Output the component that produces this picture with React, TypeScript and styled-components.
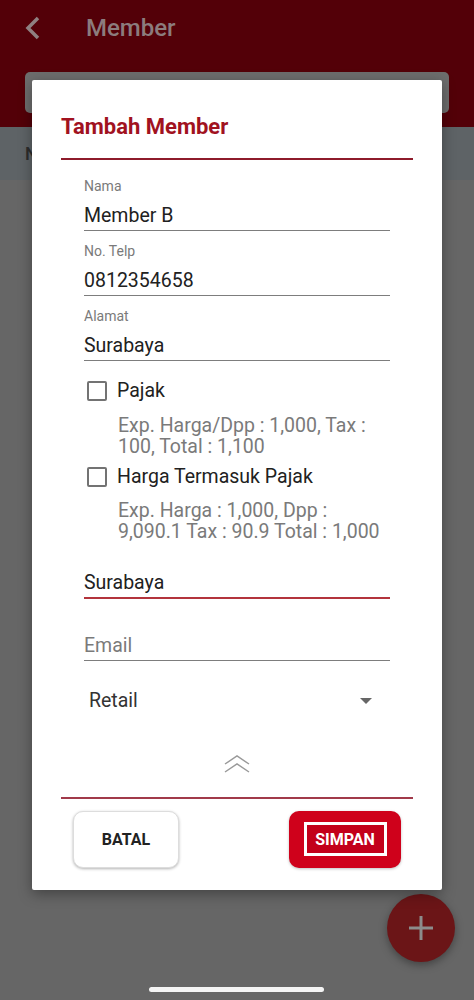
import React from 'react';
import styled, { createGlobalStyle } from 'styled-components';

const GlobalStyle = createGlobalStyle`
    html, body {
        margin: 0;
        padding: 0;
        background: #666666;
    }
    * {
        box-sizing: border-box;
    }
`;

const Screen = styled.div`
    position: relative;
    width: 474px;
    height: 1000px;
    overflow: hidden;
    background: #666666;
    font-family: Roboto, "Liberation Sans", sans-serif;
`;

// dimmed page behind the dialog
const AppBar = styled.header`
    height: 127px;
    background: #530008;
    display: flex;
    flex-direction: column;
`;

const TopRow = styled.div`
    height: 56px;
    display: flex;
    align-items: center;
    padding-left: 25px;
    gap: 45px;
`;

const PageTitle = styled.h1`
    margin: 0;
    font-size: 24px;
    line-height: 56px;
    font-weight: 500;
    color: #8c7c7d;
`;

const SearchBar = styled.div`
    margin: 16px 25px 0;
    height: 41px;
    border-radius: 5px;
    background: #6d6d6d;
`;

const ColumnHeader = styled.div`
    height: 53px;
    background: #5e6366;
    display: flex;
    align-items: center;
    padding-left: 25px;
    font-size: 18px;
    font-weight: 500;
    color: #2c2c2c;
`;

const Fab = styled.div`
    position: absolute;
    right: 19px;
    top: 894px;
    width: 68px;
    height: 68px;
    border-radius: 50%;
    background: #6b1517;
    box-shadow: 0 3px 8px rgba(0, 0, 0, 0.35);
    display: flex;
    align-items: center;
    justify-content: center;
`;

const HomeBar = styled.div`
    position: absolute;
    left: 149px;
    bottom: 8px;
    width: 175px;
    height: 5px;
    border-radius: 3px;
    background: #f4f4f4;
`;

// dialog
const Dialog = styled.div`
    position: absolute;
    top: 80px;
    left: 32px;
    width: 410px;
    height: 810px;
    background: #ffffff;
    border-radius: 2px;
    box-shadow: 0 4px 14px rgba(0, 0, 0, 0.35);
    padding: 34px 29px 21px;
    display: flex;
    flex-direction: column;
`;

const DialogTitle = styled.h2`
    margin: 0;
    font-size: 22px;
    line-height: 26px;
    font-weight: 700;
    color: #a1121f;
`;

const Divider = styled.div<{ $top: number; $color: string }>`
    margin-top: ${p => p.$top}px;
    height: 1.5px;
    background: ${p => p.$color};
`;

const Form = styled.div`
    padding: 0 23px;
    display: flex;
    flex-direction: column;
`;

const Field = styled.div<{ $top: number }>`
    margin-top: ${p => p.$top}px;
    display: flex;
    flex-direction: column;
`;

const Label = styled.span`
    font-size: 14px;
    line-height: 16px;
    color: #7a7a7a;
    margin-bottom: 11px;
`;

const Value = styled.div<{ $active?: boolean; $placeholder?: boolean }>`
    font-size: 19.5px;
    line-height: 22px;
    color: ${p => (p.$placeholder ? '#7a7a7a' : '#212121')};
    padding-bottom: ${p => (p.$active ? '3.5px' : '3px')};
    border-bottom: ${p => (p.$active ? '2px solid #b3343c' : '1px solid #7d7d7d')};
`;

const CheckRow = styled.label<{ $top: number }>`
    margin-top: ${p => p.$top}px;
    display: flex;
    align-items: center;
    gap: 10px;
    padding-left: 3px;
    font-size: 19.5px;
    line-height: 22px;
    color: #212121;
`;

const Box = styled.span`
    width: 20px;
    height: 20px;
    border: 2px solid #737373;
    border-radius: 2px;
`;

const Hint = styled.p<{ $top: number }>`
    margin: ${p => p.$top}px 0 0;
    padding-left: 34px;
    font-size: 19.5px;
    line-height: 21px;
    color: #7a7a7a;
`;

const Select = styled.div`
    margin-top: 29.5px;
    display: flex;
    align-items: center;
    justify-content: space-between;
    padding: 0 18px 0 5px;
    font-size: 19.5px;
    line-height: 22px;
    color: #333333;
`;

const Collapse = styled.div`
    margin-top: 43px;
    display: flex;
    justify-content: center;
`;

const Actions = styled.div`
    margin-top: 12px;
    padding: 0 12px;
    display: flex;
    justify-content: space-between;
`;

const Button = styled.button<{ $primary?: boolean }>`
    height: 57px;
    width: ${p => (p.$primary ? '112px' : '106px')};
    border-radius: 10px;
    font-family: inherit;
    font-size: 16px;
    font-weight: 700;
    display: flex;
    align-items: center;
    justify-content: center;
    padding: 0;
    border: ${p => (p.$primary ? 'none' : '1px solid #dddddd')};
    background: ${p => (p.$primary ? '#cf011b' : '#ffffff')};
    color: ${p => (p.$primary ? '#ffffff' : '#222222')};
    box-shadow: ${p => (p.$primary ? '0 1px 3px rgba(0,0,0,0.25)' : '0 1px 3px rgba(0,0,0,0.3)')};
`;

const FocusBox = styled.span`
    border: 3px solid #ffffff;
    background: #c3001a;
    width: 83px;
    height: 34px;
    display: flex;
    align-items: center;
    justify-content: center;
`;

const Back = () => (
    <svg width="16" height="24" viewBox="0 0 16 24">
        <polyline points="13,2 3,12 13,22" fill="none" stroke="#8f8081" strokeWidth="3.5" />
    </svg>
);

const Caret = () => (
    <svg width="12" height="6" viewBox="0 0 12 6">
        <polygon points="0,0 12,0 6,6" fill="#666666" />
    </svg>
);

const DoubleUp = () => (
    <svg width="26" height="18" viewBox="0 0 26 18">
        <polyline points="1,9 13,1 25,9" fill="none" stroke="#9a9a9a" strokeWidth="1.5" />
        <polyline points="1,17 13,9 25,17" fill="none" stroke="#9a9a9a" strokeWidth="1.5" />
    </svg>
);

const Plus = () => (
    <svg width="26" height="26" viewBox="0 0 26 26">
        <path d="M13 1v24M1 13h24" stroke="#8c8c8c" strokeWidth="3" />
    </svg>
);

export default function App() {
    return (
        <Screen>
            <GlobalStyle />
            <AppBar>
                <TopRow>
                    <Back />
                    <PageTitle>Member</PageTitle>
                </TopRow>
                <SearchBar />
            </AppBar>
            <ColumnHeader>Nama</ColumnHeader>
            <Fab>
                <Plus />
            </Fab>
            <HomeBar />

            <Dialog>
                <DialogTitle>Tambah Member</DialogTitle>
                <Divider $top={18} $color="#8e1b2b" />
                <Form>
                    <Field $top={18.5}>
                        <Label>Nama</Label>
                        <Value>Member B</Value>
                    </Field>
                    <Field $top={12}>
                        <Label>No. Telp</Label>
                        <Value>0812354658</Value>
                    </Field>
                    <Field $top={12}>
                        <Label>Alamat</Label>
                        <Value>Surabaya</Value>
                    </Field>

                    <CheckRow $top={18.5}>
                        <Box />
                        Pajak
                    </CheckRow>
                    <Hint $top={13.5}>
                        Exp. Harga/Dpp : 1,000, Tax :<br />100, Total : 1,100
                    </Hint>
                    <CheckRow $top={8.5}>
                        <Box />
                        Harga Termasuk Pajak
                    </CheckRow>
                    <Hint $top={12.5}>
                        Exp. Harga : 1,000, Dpp :<br />9,090.1 Tax : 90.9 Total : 1,000
                    </Hint>

                    <Field $top={29.5}>
                        <Value $active>Surabaya</Value>
                    </Field>
                    <Field $top={35.5}>
                        <Value $placeholder>Email</Value>
                    </Field>
                    <Select>
                        Retail
                        <Caret />
                    </Select>
                </Form>
                <Collapse>
                    <DoubleUp />
                </Collapse>
                <Divider $top={24} $color="#a13a4a" />
                <Actions>
                    <Button>BATAL</Button>
                    <Button $primary>
                        <FocusBox>SIMPAN</FocusBox>
                    </Button>
                </Actions>
            </Dialog>
        </Screen>
    );
}
